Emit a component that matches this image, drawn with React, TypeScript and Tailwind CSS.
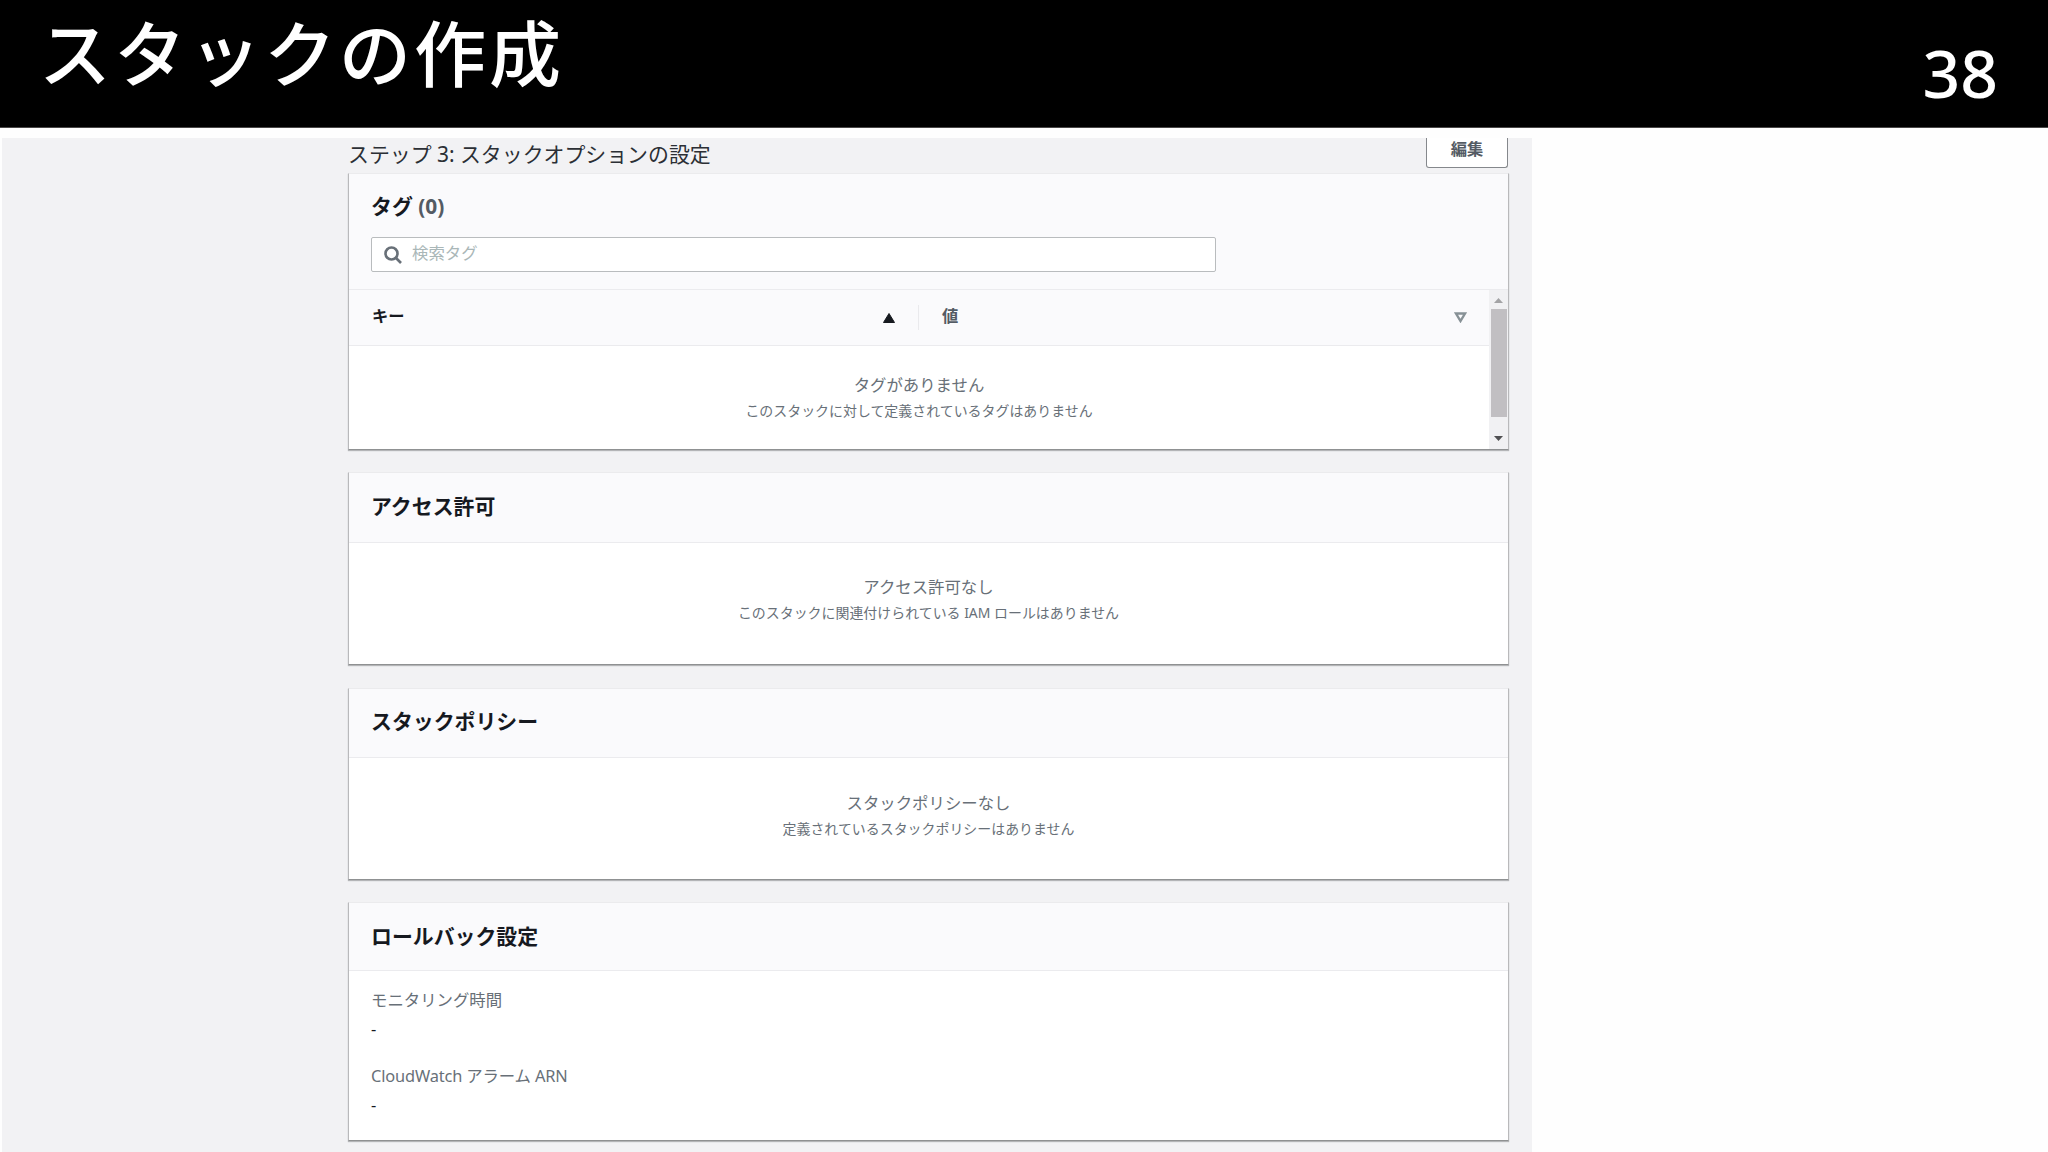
import type { ReactNode } from 'react';

function Card({ title, className, headerClass, children }: { title: ReactNode; className: string; headerClass: string; children: ReactNode }) {
  return (
    <section className={`w-[1161px] shrink-0 overflow-hidden border border-t-[#ebebed] border-x-[#b9b9bb] border-b-[#8f9192] bg-white shadow-[0_1px_1px_#b4b5b7] ${className}`}>
      <header className={`border-b border-[#ebebee] bg-[#fafafc] px-[22px] ${headerClass}`}>
        <h2 className="text-[20.9px] leading-[32px] font-bold text-[#16191f]">{title}</h2>
      </header>
      {children}
    </section>
  );
}

function Empty({ title, text, className }: { title: string; text: string; className: string }) {
  return (
    <div className={`flex flex-col items-center whitespace-nowrap text-[#687078] ${className}`}>
      <p className="text-[16.4px] leading-[26px]">{title}</p>
      <p className="text-[13.95px] leading-[26px]">{text}</p>
    </div>
  );
}

function TagTable() {
  return (
    <div className="flex h-[160px]">
      <div className="grow">
        <div className="flex h-[56px] items-center border-b border-[#ebebee] bg-[#fafafc] text-[16.3px] font-bold">
          <div className="flex w-[570px] items-center justify-between border-r border-[#eaeaed] pr-[23px] pl-[23px] text-[#16191f]">
            <span className="-mt-[3px] leading-[28px]">キー</span>
            <svg width="12" height="10" viewBox="0 0 12 10"><path d="M6 0.5 11.5 9.5H.5Z" fill="#16191f" stroke="#16191f" strokeLinejoin="round" /></svg>
          </div>
          <div className="flex grow items-center justify-between pr-[22px] pl-[23px] text-[#545b64]">
            <span className="-mt-[3px] leading-[28px]">値</span>
            <svg width="13" height="11" viewBox="0 0 13 11"><path d="M2 1.5H11L6.5 9Z" fill="none" stroke="#879196" strokeWidth="2.4" /></svg>
          </div>
        </div>
        <Empty className="pt-[26px]" title="タグがありません" text="このスタックに対して定義されているタグはありません" />
      </div>
      <div className="flex w-[19px] flex-col items-center bg-[#f1f1f3]">
        <svg width="9" height="5" viewBox="0 0 9 5" className="mt-[8px]"><path d="M4.5 0 9 5H0Z" fill="#a3a3a5" /></svg>
        <div className="mt-[6px] h-[108px] w-[16px] bg-[#c1bfc2]" />
        <svg width="9" height="5" viewBox="0 0 9 5" className="mt-[19px]"><path d="M4.5 5 9 0H0Z" fill="#505052" /></svg>
      </div>
    </div>
  );
}

export default function App() {
  return (
    <div lang="ja" className="flex h-[1152px] w-[2048px] flex-col overflow-hidden bg-[#fefefe] font-['Noto_Sans','Noto_Sans_CJK_JP',sans-serif]">
      <header className="flex h-[128px] shrink-0 justify-between border-b border-[#4a4848] bg-black pr-[50px] pl-[39px] text-white">
        <h1 className="pt-[2px] font-['Noto_Sans_CJK_JP',sans-serif] text-[72px] leading-[96px] font-medium tracking-[3px]">スタックの作成</h1>
        <span className="pt-[24px] text-[66px] leading-[96px] font-medium">38</span>
      </header>
      <main className="mt-[10px] ml-[2px] flex h-[1014px] w-[1530px] flex-col bg-[#f2f2f4] pl-[346px]">
        <div className="flex h-[35px] w-[1161px] shrink-0 justify-between">
          <h2 className="mt-px text-[20.9px] leading-[30px] text-[#2b2f35]">ステップ 3: スタックオプションの設定</h2>
          <button className="mr-px flex h-[30px] w-[82px] items-center justify-center rounded-b-[3px] border border-t-0 border-[#85888c] bg-white pb-[7px] text-[16.3px] leading-[24px] font-bold text-[#545b64]">編集</button>
        </div>

        <Card className="h-[277px]" headerClass="h-[116px] pt-[16px]" title={<>タグ <span className="text-[#545b64]">(0)</span></>}>
          <TagTable />
        </Card>
        <div className="relative">
          <div className="absolute top-[-213px] left-[23px] flex h-[35px] w-[845px] items-center gap-[10px] rounded-[2px] border border-[#b9bcbe] bg-white pl-[12px]">
            <svg width="18" height="18" viewBox="0 0 18 18" fill="none" stroke="#687078" strokeWidth="2.6"><circle cx="7.5" cy="7.5" r="6" /><path d="m12 12 5 5" /></svg>
            <span className="-mt-[3px] text-[16.4px] leading-[24px] text-[#aab7b8]">検索タグ</span>
          </div>
        </div>

        <Card className="mt-[22px] h-[193px]" headerClass="h-[70px] pt-[17px]" title="アクセス許可">
          <Empty className="pt-[31px]" title="アクセス許可なし" text="このスタックに関連付けられている IAM ロールはありません" />
        </Card>
        <Card className="mt-[23px] h-[192px]" headerClass="h-[69px] pt-[16px]" title="スタックポリシー">
          <Empty className="pt-[32px]" title="スタックポリシーなし" text="定義されているスタックポリシーはありません" />
        </Card>
        <Card className="mt-[22px] h-[239px]" headerClass="h-[68px] pt-[17px]" title="ロールバック設定">
          <dl className="px-[22px] pt-[15px] text-[16.4px] leading-[28px] text-[#687078]">
            <dt>モニタリング時間</dt>
            <dd className="mt-px text-[#16191f]">-</dd>
            <dt className="mt-[19px] tracking-[-0.15px]">CloudWatch アラーム ARN</dt>
            <dd className="mt-px text-[#16191f]">-</dd>
          </dl>
        </Card>
      </main>
    </div>
  );
}
